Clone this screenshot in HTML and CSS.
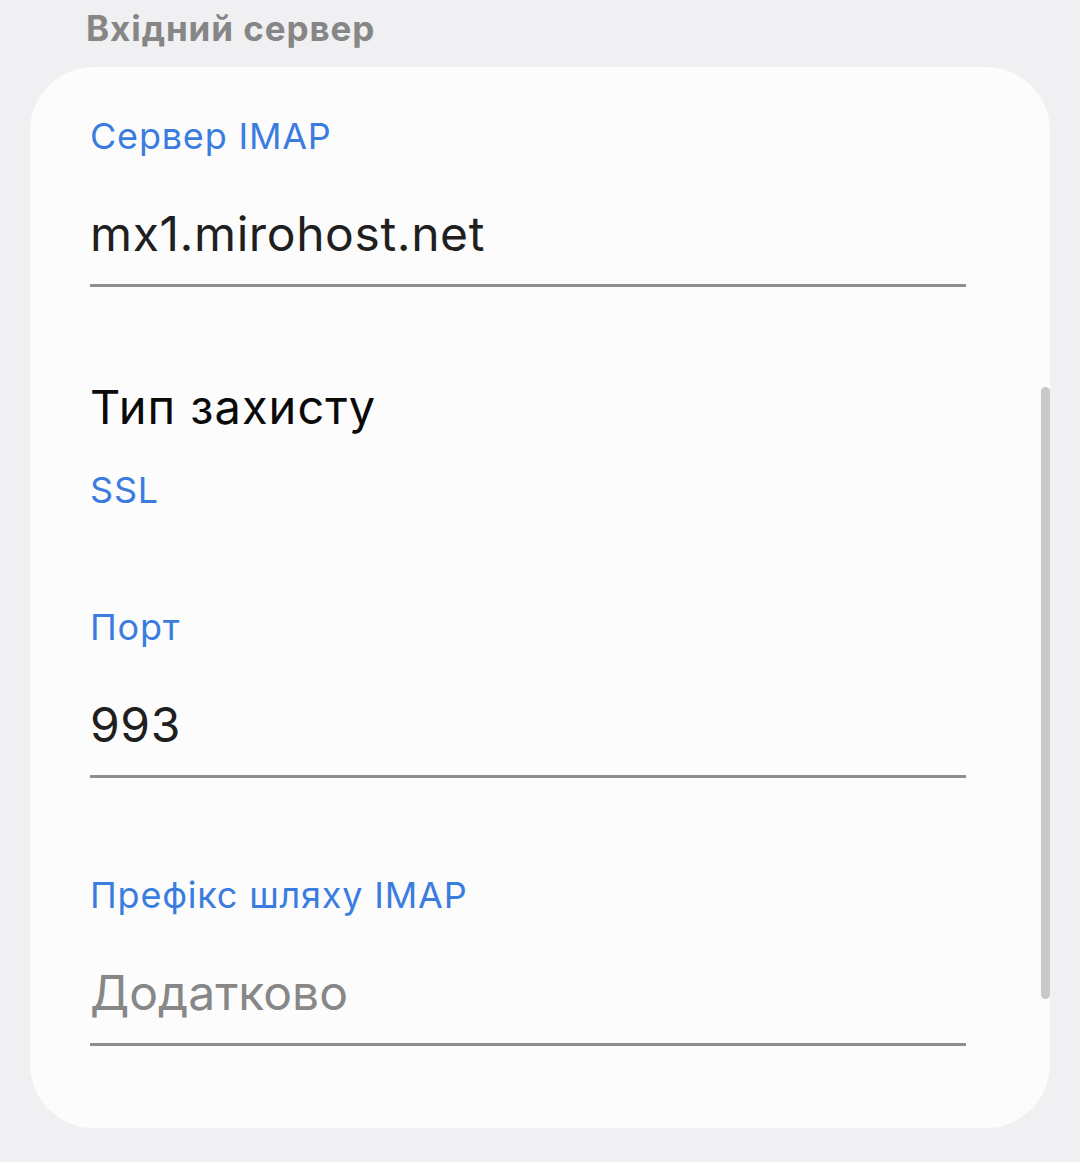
FILE: index.html
```html
<!DOCTYPE html>
<html lang="uk">
<head>
<meta charset="utf-8">
<title>Вхідний сервер</title>
<link rel="stylesheet" href="styles.css">
</head>
<body>
<div class="page">
  <div class="section-title">Вхідний сервер</div>
  <div class="card">
    <div class="field">
      <div class="label">Сервер IMAP</div>
      <div class="value">mx1.mirohost.net</div>
    </div>
    <div class="select">
      <div class="select-title">Тип захисту</div>
      <div class="label">SSL</div>
    </div>
    <div class="field field-gap">
      <div class="label">Порт</div>
      <div class="value">993</div>
    </div>
    <div class="field field-gap2">
      <div class="label">Префікс шляху IMAP</div>
      <div class="value placeholder">Додатково</div>
    </div>
    <div class="scrollbar"></div>
  </div>
</div>
</body>
</html>
```

FILE: styles.css
```css
html, body {
  margin: 0;
  padding: 0;
  background: #f0f0f2;
}
body {
  font-family: Inter, Roboto, "Noto Sans", sans-serif;
  width: 1080px;
  height: 1162px;
  overflow: hidden;
}
.page {
  display: flex;
  flex-direction: column;
}
.section-title {
  padding: 3px 0 0 86px;
  font-size: 35px;
  font-weight: 700;
  letter-spacing: 0.9px;
  line-height: 50px;
  color: #868686;
}
.card {
  position: relative;
  margin: 14px 30px 0 30px;
  background: #fcfcfc;
  border-radius: 64px;
  padding: 44px 84px 82px 60px;
  display: flex;
  flex-direction: column;
}
.label {
  font-size: 36px;
  letter-spacing: 0.8px;
  line-height: 50px;
  color: #3b7ddf;
}
.value {
  margin-top: 43px;
  font-size: 48px;
  letter-spacing: 0.6px;
  line-height: 60px;
  color: #1f1f1f;
  padding-bottom: 20px;
  border-bottom: 3px solid #8e8e8e;
}
.placeholder {
  color: #878787;
  letter-spacing: 0;
}
.select {
  margin-top: 90px;
  display: flex;
  flex-direction: column;
  gap: 28px;
}
.select-title {
  font-size: 47px;
  letter-spacing: 1px;
  line-height: 60px;
  color: #0a0a0a;
}
.field-gap {
  margin-top: 87px;
}
.field-gap2 {
  margin-top: 92px;
}
.scrollbar {
  position: absolute;
  right: 0;
  top: 320px;
  width: 9px;
  height: 612px;
  border-radius: 5px;
  background: #c9c9c9;
}
```
